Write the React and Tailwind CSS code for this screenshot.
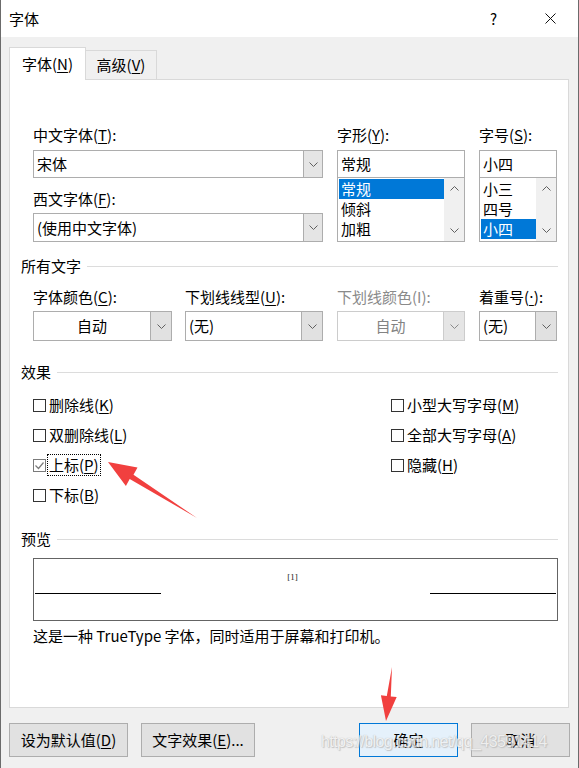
import React from "react";

const Chev = ({ dir = "down", color = "#606060" }) => (
  <svg width="9" height="5" viewBox="0 0 9 5" className="block">
    {dir === "down" ? (
      <polyline points="0.5,0.5 4.5,4.5 8.5,0.5" fill="none" stroke={color} strokeWidth="1" />
    ) : (
      <polyline points="0.5,4.5 4.5,0.5 8.5,4.5" fill="none" stroke={color} strokeWidth="1" />
    )}
  </svg>
);

const U = ({ children }) => <span className="underline underline-offset-[2px] decoration-1">{children}</span>;

function Combo({ w, h, text }) {
  return (
    <div className={`flex border border-[#adadad] bg-white ${w} ${h}`}>
      <div className="flex-1 flex items-center pl-[3px]">{text}</div>
      <div className="w-[19px] border-l border-[#adadad] bg-[#e5e5e5] flex items-center justify-center">
        <Chev />
      </div>
    </div>
  );
}

function Drop({ w, text, center, disabled }) {
  return (
    <div className={`flex h-[30px] border ${disabled ? "border-[#cccccc]" : "border-[#adadad]"} bg-white ${w}`}>
      <div className={`flex-1 flex items-center ${center ? "justify-center" : "pl-[3px]"} ${disabled ? "text-[#838383]" : ""}`}>{text}</div>
      <div className={`w-[21px] border-l ${disabled ? "border-[#cccccc] bg-[#e5e5e5]" : "border-[#adadad] bg-[#e1e1e1]"} flex items-center justify-center`}>
        <Chev color={disabled ? "#8a8a8a" : "#606060"} />
      </div>
    </div>
  );
}

function ListBox({ w, items, sel }) {
  return (
    <div className={`-mt-px flex h-[65px] border border-[#adadad] bg-white ${w}`}>
      <div className="flex-1 pt-[1px] pl-[1px]">
        {items.map((t, i) => (
          <div
            key={t}
            className={`h-[20px] leading-[20px] pl-[2px] ${i === sel ? "bg-[#0078d7] text-white" : ""}`}
          >
            {t}
          </div>
        ))}
      </div>
      <div className="w-[20px] bg-[#f0f0f0] flex flex-col items-center justify-between py-[8px]">
        <Chev dir="up" />
        <Chev dir="down" />
      </div>
    </div>
  );
}

function Check({ label, checked, focus }) {
  return (
    <div className="h-[30px] flex items-center">
      <div
        className={`w-[13px] h-[13px] border ${checked ? "border-[#7a7a7a]" : "border-[#333333]"} bg-white flex items-center justify-center`}
      >
        {checked && (
          <svg width="11" height="11" viewBox="0 0 11 11">
            <polyline points="1.5,5.5 4.5,8.5 9.5,2.5" fill="none" stroke="#7a7a7a" strokeWidth="1.2" />
          </svg>
        )}
      </div>
      <div className={`ml-[2px] px-[1px] ${focus ? "outline outline-1 outline-dotted outline-black" : ""}`}>{label}</div>
    </div>
  );
}

function Section({ title }) {
  return (
    <div className="flex items-center h-[20px] pr-[10px]">
      <span>{title}</span>
      <div className="flex-1 h-px bg-[#dcdcdc] ml-[6px]" />
    </div>
  );
}

function Btn({ w, children, primary }) {
  return (
    <div
      className={`h-[34px] ${w} flex items-center justify-center border ${
        primary ? "border-[#0078d7] bg-[#e5f1fb]" : "border-[#adadad] bg-[#e1e1e1]"
      }`}
    >
      {children}
    </div>
  );
}

export default function App() {
  return (
    <div className="relative w-[579px] h-[768px] bg-[#f0f0f0] border-x border-[#6b6b6b] overflow-hidden font-['Noto_Sans_CJK_SC',sans-serif] text-[15px] leading-[20px] text-black">
      {/* title bar */}
      <div className="h-[37px] bg-white flex items-center pl-[8px]">
        <span>字体</span>
        <div className="ml-auto flex items-center">
          <span className="text-[15px] mr-[48px]">?</span>
          <svg width="11" height="11" viewBox="0 0 11 11" className="mr-[22px]">
            <line x1="0.5" y1="0.5" x2="10.5" y2="10.5" stroke="#111" strokeWidth="1" />
            <line x1="10.5" y1="0.5" x2="0.5" y2="10.5" stroke="#111" strokeWidth="1" />
          </svg>
        </div>
      </div>

      <div className="pl-[8px] pt-[10px]">
        {/* tabs */}
        <div className="relative z-10 flex items-end h-[33px]">
          <div className="h-[33px] w-[77px] bg-white border-t border-x border-[#d9d9d9] flex items-center justify-center">
            字体(<U>N</U>)
          </div>
          <div className="h-[30px] w-[71px] bg-[#f0f0f0] border-t border-r border-b border-[#d9d9d9] flex items-center justify-center">
            高级(<U>V</U>)
          </div>
        </div>

        {/* panel */}
        <div className="-mt-px w-[560px] h-[629px] bg-white border border-[#d9d9d9] pl-[11px] pt-[45px]">
          {/* fonts */}
          <div className="flex pl-[12px]">
            <div className="w-[290px]">
              <div className="h-[20px]">中文字体(<U>T</U>):</div>
              <div className="mt-[5px]">
                <Combo w="w-[290px]" h="h-[28px]" text="宋体" />
              </div>
              <div className="mt-[11px] h-[20px]">西文字体(<U>F</U>):</div>
              <div className="mt-[4px]">
                <Combo w="w-[290px]" h="h-[29px]" text="(使用中文字体)" />
              </div>
            </div>
            <div className="w-[128px] ml-[14px]">
              <div className="h-[20px]">字形(<U>Y</U>):</div>
              <div className="mt-[5px] h-[28px] w-[128px] border border-[#adadad] flex items-center pl-[3px]">常规</div>
              <ListBox w="w-[128px]" items={["常规", "倾斜", "加粗"]} sel={0} />
            </div>
            <div className="w-[78px] ml-[14px]">
              <div className="h-[20px]">字号(<U>S</U>):</div>
              <div className="mt-[5px] h-[28px] w-[78px] border border-[#adadad] flex items-center pl-[3px]">小四</div>
              <ListBox w="w-[78px]" items={["小三", "四号", "小四"]} sel={2} />
            </div>
          </div>

          {/* all text */}
          <div className="mt-[14px]">
            <Section title="所有文字" />
          </div>
          <div className="mt-[11px] pl-[12px] flex">
            <div className="w-[139px]">
              <div className="h-[20px]">字体颜色(<U>C</U>):</div>
              <div className="mt-[4px]"><Drop w="w-[139px]" text="自动" center /></div>
            </div>
            <div className="w-[138px] ml-[13px]">
              <div className="h-[20px]">下划线线型(<U>U</U>):</div>
              <div className="mt-[4px]"><Drop w="w-[138px]" text="(无)" /></div>
            </div>
            <div className="w-[128px] ml-[14px]">
              <div className="h-[20px] text-[#8a8a8a]">下划线颜色(I):</div>
              <div className="mt-[4px]"><Drop w="w-[128px]" text="自动" center disabled /></div>
            </div>
            <div className="w-[78px] ml-[14px]">
              <div className="h-[20px]">
                着重号(<span className="font-['DejaVu_Sans',sans-serif] underline underline-offset-[2px] decoration-1">·</span>):
              </div>
              <div className="mt-[4px]"><Drop w="w-[78px]" text="(无)" /></div>
            </div>
          </div>

          {/* effects */}
          <div className="mt-[21px]">
            <Section title="效果" />
          </div>
          <div className="mt-[8px] pl-[12px] flex">
            <div className="w-[358px]">
              <Check label={<>删除线(<U>K</U>)</>} />
              <Check label={<>双删除线(<U>L</U>)</>} />
              <Check label={<>上标(<U>P</U>)</>} checked focus />
              <Check label={<>下标(<U>B</U>)</>} />
            </div>
            <div>
              <Check label={<>小型大写字母(<U>M</U>)</>} />
              <Check label={<>全部大写字母(<U>A</U>)</>} />
              <Check label={<>隐藏(<U>H</U>)</>} />
            </div>
          </div>

          {/* preview */}
          <div className="mt-[19px]">
            <Section title="预览" />
          </div>
          <div className="mt-[9px] ml-[12px] w-[525px] h-[63px] border border-[#646464] flex items-end pb-[26px] px-[1px]">
            <div className="w-[126px] h-px bg-black" />
            <div className="flex-1 self-stretch flex justify-center pt-[12px] pr-[6px]">
              <span className="text-[9px] leading-[12px] font-['Liberation_Serif',serif] text-[#222]">[1]</span>
            </div>
            <div className="w-[126px] h-px bg-black" />
          </div>
          <div className="mt-[5px] pl-[12px] h-[20px]">这是一种 TrueType 字体，同时适用于屏幕和打印机。</div>
        </div>

        {/* buttons */}
        <div className="mt-[15px] flex">
          <Btn w="w-[119px]">设为默认值(<U>D</U>)</Btn>
          <div className="ml-[13px]">
            <Btn w="w-[114px]">文字效果(<U>E</U>)...</Btn>
          </div>
          <div className="ml-[104px]">
            <Btn w="w-[99px]" primary>确定</Btn>
          </div>
          <div className="ml-[13px]">
            <Btn w="w-[99px]">取消</Btn>
          </div>
        </div>
      </div>

      {/* watermark */}
      <div className="absolute left-[320px] top-[731px] text-[16px] leading-[22px] tracking-[-0.6px] font-['Liberation_Sans',sans-serif] text-[#f2f2f2] [text-shadow:0_0_1px_#a8a8a8,1px_1px_1px_#bcbcbc] opacity-80 pointer-events-none">
        https://blog.csdn.net/qq_43591414
      </div>

      {/* red arrows */}
      <svg className="absolute left-0 top-0 pointer-events-none" width="579" height="768" viewBox="0 0 579 768">
        <polygon
          points="107,462 136.5,467.5 132.5,474.7 196,518 128.7,478.9 124.9,486.1"
          fill="#f1403f"
        />
        <polygon
          points="385,721 379.9,695.3 385.8,696 391,667 389.8,696.5 395.7,697.1"
          fill="#f1403f"
        />
      </svg>
    </div>
  );
}
